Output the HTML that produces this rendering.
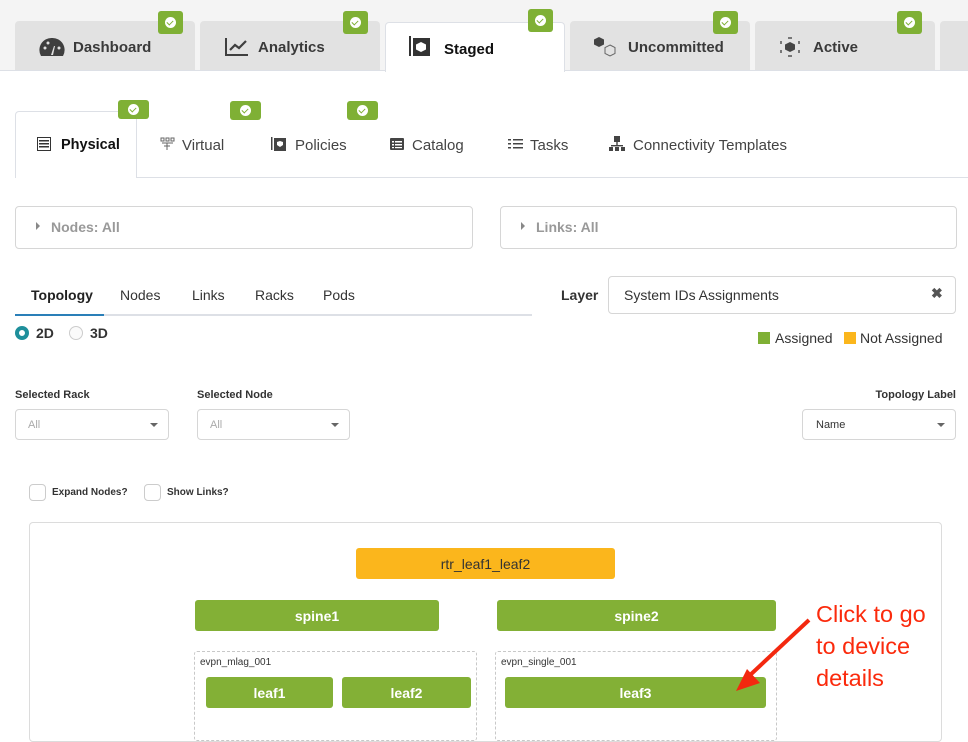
<!DOCTYPE html>
<html><head><meta charset="utf-8"><style>
*{box-sizing:border-box;margin:0;padding:0}
body{width:968px;height:728px;overflow:hidden;background:#fff;font-family:"Liberation Sans",sans-serif;color:#333;position:relative}
.a{position:absolute}
.tab{position:absolute;top:21px;height:49px;width:180px;background:#e2e2e2;border-radius:4px 4px 0 0;font-weight:bold;font-size:15px;color:#3a3a3a;display:flex;align-items:center;padding-left:58px;padding-top:4px}
.badge{position:absolute;width:25px;height:23px;background:#7fb035;border-radius:3px;display:flex;align-items:center;justify-content:center}
.badge i{width:11px;height:11px;border-radius:50%;background:#fff;display:block;position:relative}
.badge i:after{content:"";position:absolute;left:3px;top:2px;width:3px;height:5px;border:solid #7fb035;border-width:0 1.5px 1.5px 0;transform:rotate(45deg)}
.sub{position:absolute;top:137px;font-size:15px;color:#444}
.box{position:absolute;border:1px solid #d6d6d6;border-radius:4px;background:#fff}
.node{position:absolute;height:31px;border-radius:3px;background:#83b036;color:#fff;font-weight:bold;font-size:14px;display:flex;align-items:center;justify-content:center}
.grp{position:absolute;border:1px dashed #c8c8c8;border-radius:3px}
.gl{position:absolute;font-size:10px;color:#333}
.caret{position:absolute;width:0;height:0;border-left:4px solid transparent;border-right:4px solid transparent;border-top:4px solid #666}
.cb{position:absolute;width:17px;height:17px;border:1px solid #ccc;border-radius:4px;background:#fff}
</style></head><body>
<div class="a" style="left:0;top:0;width:968px;height:70px;background:#f4f4f4"></div>
<div class="a" style="left:0;top:70px;width:968px;height:1px;background:#dde0e6"></div>

<div class="tab" style="left:15px">Dashboard</div>
<svg class="a" style="left:39px;top:37px" width="26" height="22" viewBox="0 0 26 22"><path d="M13 1A12 12 0 0 0 2 19h22A12 12 0 0 0 13 1z" fill="#3f3f3f"/><path d="M12 18l3-9 1 0-2 9z" fill="#e2e2e2"/><circle cx="6" cy="11" r="1.5" fill="#e2e2e2"/><circle cx="9" cy="6" r="1.5" fill="#e2e2e2"/><circle cx="20" cy="11" r="1.5" fill="#e2e2e2"/></svg>
<div class="tab" style="left:200px">Analytics</div>
<svg class="a" style="left:225px;top:37px" width="24" height="20" viewBox="0 0 24 20"><path d="M1 1v17h22" stroke="#3f3f3f" stroke-width="2" fill="none"/><path d="M5 13l5-5 4 3 7-7" stroke="#3f3f3f" stroke-width="2.2" fill="none"/></svg>
<div class="tab" style="left:385px;top:22px;background:#fff;border:1px solid #dde0e6;border-bottom:none;height:50px;color:#111">Staged</div>
<svg class="a" style="left:409px;top:36px" width="22" height="22" viewBox="0 0 22 22"><rect x="0" y="0" width="2" height="20" fill="#333"/><rect x="4" y="2" width="17" height="18" fill="#333"/><path d="M12 6l5 2.5v5L12 16l-5-2.5v-5z" fill="#fff"/></svg>
<div class="tab" style="left:570px">Uncommitted</div>
<svg class="a" style="left:593px;top:36px" width="24" height="22" viewBox="0 0 24 22"><path d="M6 1l5 2.5v5L6 11 1 8.5v-5z" fill="#444"/><path d="M17 9l5 2.5v6L17 20l-5-2.5v-6z" fill="none" stroke="#666"/></svg>
<div class="tab" style="left:755px">Active</div>
<svg class="a" style="left:779px;top:36px" width="22" height="22" viewBox="0 0 22 22"><path d="M11 6l5 2.5v5L11 16l-5-2.5v-5z" fill="#444"/><g fill="#777"><rect x="9" y="1" width="4" height="2"/><rect x="9" y="19" width="4" height="2"/><rect x="1" y="5" width="2" height="3"/><rect x="19" y="5" width="2" height="3"/><rect x="1" y="14" width="2" height="3"/><rect x="19" y="14" width="2" height="3"/></g></svg>
<div class="tab" style="left:940px;padding-left:24px">▝</div>

<div class="badge" style="left:158px;top:11px"><i></i></div>
<div class="badge" style="left:343px;top:11px"><i></i></div>
<div class="badge" style="left:528px;top:9px"><i></i></div>
<div class="badge" style="left:713px;top:11px"><i></i></div>
<div class="badge" style="left:897px;top:11px"><i></i></div>

<div class="a" style="left:15px;top:177px;width:953px;height:1px;background:#dde0e6"></div>
<div class="a" style="left:15px;top:111px;width:122px;height:67px;background:#fff;border:1px solid #dde0e6;border-bottom:none;border-radius:4px 4px 0 0"></div>
<div class="badge" style="left:118px;top:100px;width:31px;height:19px"><i></i></div>
<div class="badge" style="left:230px;top:101px;width:31px;height:19px"><i></i></div>
<div class="badge" style="left:347px;top:101px;width:31px;height:19px"><i></i></div>
<svg class="a" style="left:37px;top:137px" width="14" height="14"><rect x="0.5" y="0.5" width="13" height="13" fill="none" stroke="#333"/><g fill="#333"><rect x="2" y="3" width="10" height="1.5"/><rect x="2" y="6" width="10" height="1.5"/><rect x="2" y="9" width="10" height="1.5"/></g></svg>
<div class="sub" style="left:61px;font-weight:bold;color:#111;font-size:14.5px">Physical</div>
<svg class="a" style="left:160px;top:137px" width="15" height="14"><g fill="none" stroke="#666"><rect x="1" y="1" width="3" height="3"/><rect x="6" y="1" width="3" height="3"/><rect x="11" y="1" width="3" height="3"/><path d="M2 6h11M7 6v7M4 9h6"/></g></svg>
<div class="sub" style="left:182px">Virtual</div>
<svg class="a" style="left:271px;top:137px" width="15" height="14"><rect x="0" y="0" width="1.5" height="13" fill="#444"/><rect x="3" y="1" width="12" height="13" fill="#444"/><path d="M9 4l3 1v3l-3 2-3-2V5z" fill="#fff"/></svg>
<div class="sub" style="left:295px">Policies</div>
<svg class="a" style="left:390px;top:138px" width="14" height="12"><rect width="14" height="12" rx="1" fill="#444"/><g fill="#fff"><rect x="2" y="3" width="2" height="1.5"/><rect x="5" y="3" width="7" height="1.5"/><rect x="2" y="6" width="2" height="1.5"/><rect x="5" y="6" width="7" height="1.5"/><rect x="2" y="9" width="2" height="1.2"/><rect x="5" y="9" width="7" height="1.2"/></g></svg>
<div class="sub" style="left:412px">Catalog</div>
<svg class="a" style="left:508px;top:138px" width="15" height="12"><g fill="#444"><rect x="5" y="1" width="10" height="1.5"/><rect x="5" y="5" width="10" height="1.5"/><rect x="5" y="9" width="10" height="1.5"/><rect x="0" y="1" width="3" height="1.5"/><rect x="0" y="5" width="3" height="1.5"/><rect x="0" y="9" width="3" height="1.5"/></g></svg>
<div class="sub" style="left:530px">Tasks</div>
<svg class="a" style="left:609px;top:136px" width="16" height="16"><g fill="#444"><rect x="5" y="0" width="6" height="6"/><rect x="7.3" y="6" width="1.4" height="4"/><rect x="2" y="9" width="12" height="1.4"/><rect x="0" y="11" width="4" height="4"/><rect x="6" y="11" width="4" height="4"/><rect x="12" y="11" width="4" height="4"/></g></svg>
<div class="sub" style="left:633px">Connectivity Templates</div>

<div class="box" style="left:15px;top:206px;width:458px;height:43px"></div>
<div class="a" style="left:36px;top:222px;border-left:4px solid #888;border-top:4px solid transparent;border-bottom:4px solid transparent"></div>
<div class="a" style="left:51px;top:219px;font-size:14px;color:#999;font-weight:bold">Nodes: All</div>
<div class="box" style="left:500px;top:206px;width:457px;height:43px"></div>
<div class="a" style="left:521px;top:222px;border-left:4px solid #888;border-top:4px solid transparent;border-bottom:4px solid transparent"></div>
<div class="a" style="left:536px;top:219px;font-size:14px;color:#999;font-weight:bold">Links: All</div>

<div class="a" style="left:31px;top:287px;font-size:14px;font-weight:bold;color:#222">Topology</div>
<div class="a" style="left:120px;top:287px;font-size:14px">Nodes</div>
<div class="a" style="left:192px;top:287px;font-size:14px">Links</div>
<div class="a" style="left:255px;top:287px;font-size:14px">Racks</div>
<div class="a" style="left:323px;top:287px;font-size:14px">Pods</div>
<div class="a" style="left:15px;top:314px;width:517px;height:2px;background:#dde0e6"></div>
<div class="a" style="left:15px;top:314px;width:89px;height:2px;background:#2a7fb8"></div>
<div class="a" style="left:15px;top:326px;width:14px;height:14px;border-radius:50%;border:4px solid #1e8f9b;background:#fff"></div>
<div class="a" style="left:36px;top:325px;font-size:14px;font-weight:bold">2D</div>
<div class="a" style="left:69px;top:326px;width:14px;height:14px;border-radius:50%;border:1px solid #ccc;background:#fafafa"></div>
<div class="a" style="left:90px;top:325px;font-size:14px;font-weight:bold">3D</div>

<div class="a" style="left:561px;top:287px;font-size:14px;font-weight:bold">Layer</div>
<div class="box" style="left:608px;top:276px;width:348px;height:38px"></div>
<div class="a" style="left:624px;top:287px;font-size:14px">System IDs Assignments</div>
<div class="a" style="left:931px;top:285px;font-size:14px;font-weight:bold;color:#555">✖</div>
<div class="a" style="left:758px;top:332px;width:12px;height:12px;background:#7fb035"></div>
<div class="a" style="left:775px;top:330px;font-size:14px">Assigned</div>
<div class="a" style="left:844px;top:332px;width:12px;height:12px;background:#fbb61c"></div>
<div class="a" style="left:860px;top:330px;font-size:14px">Not Assigned</div>

<div class="a" style="left:15px;top:389px;font-size:11px;font-weight:bold">Selected Rack</div>
<div class="box" style="left:15px;top:409px;width:154px;height:31px"></div>
<div class="a" style="left:28px;top:419px;font-size:11px;color:#aaa">All</div>
<div class="caret" style="left:150px;top:423px"></div>
<div class="a" style="left:197px;top:389px;font-size:11px;font-weight:bold">Selected Node</div>
<div class="box" style="left:197px;top:409px;width:153px;height:31px"></div>
<div class="a" style="left:210px;top:419px;font-size:11px;color:#aaa">All</div>
<div class="caret" style="left:331px;top:423px"></div>
<div class="a" style="left:856px;top:389px;width:100px;text-align:right;font-size:11px;font-weight:bold">Topology Label</div>
<div class="box" style="left:802px;top:409px;width:154px;height:31px"></div>
<div class="a" style="left:816px;top:419px;font-size:11px">Name</div>
<div class="caret" style="left:937px;top:423px"></div>

<div class="cb" style="left:29px;top:484px"></div>
<div class="a" style="left:52px;top:487px;font-size:10px;font-weight:bold">Expand Nodes?</div>
<div class="cb" style="left:144px;top:484px"></div>
<div class="a" style="left:167px;top:487px;font-size:10px;font-weight:bold">Show Links?</div>

<div class="a" style="left:29px;top:522px;width:913px;height:220px;border:1px solid #dcdcdc;border-radius:4px"></div>
<div class="node" style="left:356px;top:548px;width:259px;background:#fbb61c;color:#333;font-weight:normal">rtr_leaf1_leaf2</div>
<div class="node" style="left:195px;top:600px;width:244px">spine1</div>
<div class="node" style="left:497px;top:600px;width:279px">spine2</div>
<div class="grp" style="left:194px;top:651px;width:283px;height:90px"></div>
<div class="gl" style="left:200px;top:657px">evpn_mlag_001</div>
<div class="grp" style="left:495px;top:651px;width:282px;height:90px"></div>
<div class="gl" style="left:501px;top:657px">evpn_single_001</div>
<div class="node" style="left:206px;top:677px;width:127px">leaf1</div>
<div class="node" style="left:342px;top:677px;width:129px">leaf2</div>
<div class="node" style="left:505px;top:677px;width:261px">leaf3</div>

<svg class="a" style="left:720px;top:600px" width="100" height="100"><path d="M89 20L28 77" stroke="#f3280f" stroke-width="4" fill="none"/><path d="M16 91l24-8-13-14z" fill="#f3280f"/></svg>
<div class="a" style="left:816px;top:598px;font-size:23.5px;line-height:32px;color:#fb2a0c">Click to go<br>to device<br>details</div>
</body></html>
